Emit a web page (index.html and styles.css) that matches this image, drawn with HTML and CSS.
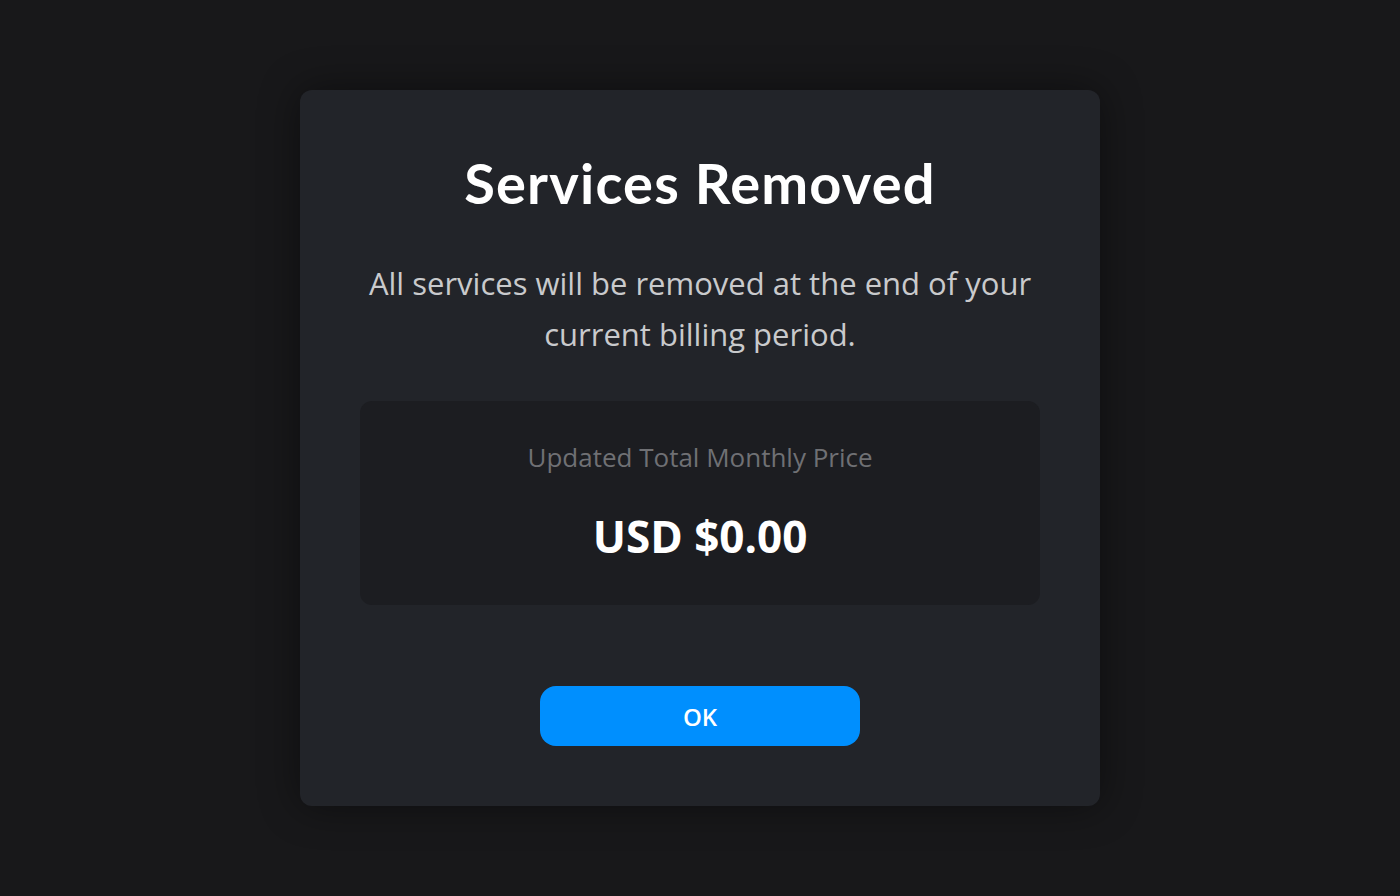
FILE: index.html
```html
<!DOCTYPE html>
<html lang="en">
<head>
  <meta charset="UTF-8" />
  <meta name="viewport" content="width=device-width, initial-scale=1.0" />
  <title>Services Removed</title>
  <link rel="stylesheet" href="styles.css">
</head>
<body>
  <div class="modal">
    <div class="title">Services Removed</div>

    <div class="message">
      All services will be removed at the end of your current billing period.
    </div>

    <div class="price-box">
      <div class="price-label">Updated Total Monthly Price</div>
      <div class="price">USD $0.00</div>
    </div>

    <button class="ok-button">OK</button>
  </div>
</body>
</html>
```

FILE: styles.css
```css
body {
  margin: 0;
  background-color: #18181a;
  font-family: 'Open Sans', 'Noto Sans', sans-serif;
  color: white;
  height: 100vh;
  display: flex;
  justify-content: center;
  align-items: flex-start;
}

.modal {
  margin-top: 90px;
  width: 800px;
  box-sizing: border-box;
  padding: 60px 60px 60px;
  background-color: #222429;
  border-radius: 12px;
  box-shadow: 0 0 40px rgba(0, 0, 0, 0.45);
  display: flex;
  flex-direction: column;
  align-items: center;
  text-align: center;
}

.title {
  font-family: 'Lato', sans-serif;
  font-weight: bold;
  font-size: 56px;
  line-height: 66px;
  letter-spacing: 1.2px;
}

.message {
  margin-top: 42px;
  width: 680px;
  font-size: 31px;
  line-height: 51px;
  color: #c9cacc;
}

.price-box {
  margin-top: 41px;
  width: 100%;
  height: 204px;
  box-sizing: border-box;
  padding-top: 38px;
  background-color: #1c1d21;
  border-radius: 12px;
}

.price-label {
  font-size: 26px;
  line-height: 36px;
  color: #6f7074;
}

.price {
  margin-top: 36px;
  font-size: 44px;
  font-weight: bold;
  line-height: 50px;
}

.ok-button {
  margin-top: 81px;
  width: 320px;
  height: 60px;
  border: none;
  border-radius: 16px;
  background-color: #008ffe;
  color: white;
  font-family: 'Open Sans', sans-serif;
  font-weight: 600;
  font-size: 24px;
  cursor: pointer;
}
```
